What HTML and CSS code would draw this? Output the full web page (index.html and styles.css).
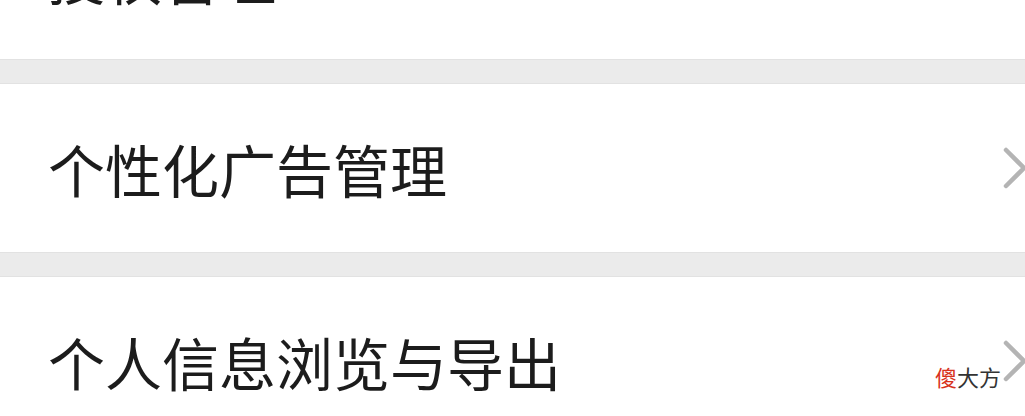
FILE: index.html
```html
<!DOCTYPE html>
<html lang="zh-CN">
<head>
<meta charset="utf-8">
<link rel="stylesheet" href="styles.css">
</head>
<body>
<div class="list">
  <div class="row"><span class="label">授权管理</span></div>
  <div class="gap"></div>
  <div class="row"><span class="label">个性化广告管理</span>
    <svg class="chev" width="26" height="44" viewBox="0 0 26 44"><polyline points="4,4 22,22 4,40" fill="none" stroke="#b4b4b4" stroke-width="4.5" stroke-linecap="round" stroke-linejoin="round"/></svg>
  </div>
  <div class="gap"></div>
  <div class="row"><span class="label">个人信息浏览与导出</span>
    <svg class="chev" width="26" height="44" viewBox="0 0 26 44"><polyline points="4,4 22,22 4,40" fill="none" stroke="#b4b4b4" stroke-width="4.5" stroke-linecap="round" stroke-linejoin="round"/></svg>
  </div>
</div>
<div class="mark"><span class="red">傻</span>大方</div>
</body>
</html>
```
FILE: styles.css
```css
html, body {
  margin: 0;
  padding: 0;
  background: #ffffff;
  width: 1025px;
  height: 416px;
  overflow: hidden;
  font-family: "Noto Sans CJK SC", "Noto Sans", sans-serif;
}
.list {
  margin-top: -109px;
  display: flex;
  flex-direction: column;
}
.row {
  height: 168px;
  display: flex;
  align-items: center;
  justify-content: space-between;
  padding-left: 48px;
  padding-right: 0;
  background: #ffffff;
  box-sizing: border-box;
}
.label {
  font-size: 57px;
  color: #1c1c1c;
  line-height: 1;
  letter-spacing: 0;
}
.chev {
  margin-right: -3px;
  flex: none;
}
.gap {
  height: 25px;
  background: #ebebeb;
  border-top: 1px solid #e2e2e2;
  border-bottom: 1px solid #e2e2e2;
  box-sizing: border-box;
}
.mark {
  position: absolute;
  left: 935px;
  top: 362px;
  font-size: 22px;
  line-height: 1.3;
  color: #333333;
}
.red {
  color: #d8321c;
}
```
